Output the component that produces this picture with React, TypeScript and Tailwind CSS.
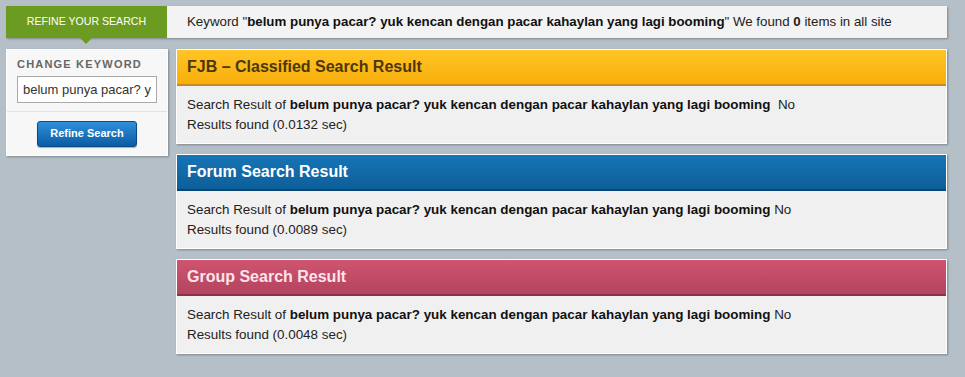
import React from 'react';

const keyword = 'belum punya pacar? yuk kencan dengan pacar kahaylan yang lagi booming';

type Result = {
  title: string;
  time: string;
  head: string;
  color: string;
  gap?: boolean;
};

const results: Result[] = [
  {
    title: 'FJB – Classified Search Result',
    time: '0.0132',
    head: 'bg-gradient-to-b from-[#ffc524] to-[#f8ae0a] border-b-2 border-[#c98a1c]',
    color: 'text-[#4d3706]',
    gap: true,
  },
  {
    title: 'Forum Search Result',
    time: '0.0089',
    head: 'bg-gradient-to-b from-[#1675b6] to-[#0d5f9a] border-b-2 border-[#0a4673]',
    color: 'text-white',
  },
  {
    title: 'Group Search Result',
    time: '0.0048',
    head: 'bg-gradient-to-b from-[#d0546f] to-[#b3445f] border-b-2 border-[#8f3048]',
    color: 'text-[#fbe4ea]',
  },
];

function ResultPanel({ r }: { r: Result }) {
  return (
    <div className="bg-[#f0f0f0] border border-white shadow-[1px_1px_2px_rgba(0,0,0,0.3)]">
      <div className={`h-[36px] flex items-center px-[10px] ${r.head}`}>
        <h2 className={`text-[16px] font-bold ${r.color}`}>{r.title}</h2>
      </div>
      <div className="px-[10px] pt-[9px] pb-[8px] text-[13.4px] leading-[20px] text-[#222]">
        Search Result of <b className="text-[#111]">{keyword}</b>
        {r.gap ? '\u00a0 ' : ' '}No
        <br />
        Results found ({r.time} sec)
      </div>
    </div>
  );
}

export default function App() {
  return (
    <div className="min-h-[377px] bg-[#b4bfc7] pt-[6px] pl-[6px] font-['Liberation_Sans',Arial,sans-serif]">
      {/* top bar */}
      <div className="w-[941px] h-[32px] flex items-center bg-[#f3f3f3] shadow-[1px_1px_2px_rgba(0,0,0,0.3)]">
        <div className="relative w-[161px] h-full bg-[#6c9b22] flex items-center justify-center text-white text-[10.6px] uppercase">
          Refine your search
          <span className="absolute left-[74px] top-full w-0 h-0 border-l-[6px] border-r-[6px] border-t-[6px] border-l-transparent border-r-transparent border-t-[#6c9b22]" />
        </div>
        <p className="pl-[20px] text-[13.3px] text-[#222]">
          Keyword "<b className="text-[#111]">{keyword}</b>" We found <b>0</b> items in all site
        </p>
      </div>

      <div className="flex gap-[8px] mt-[11px]">
        {/* sidebar */}
        <div className="w-[162px] h-[107px] self-start bg-[#f7f7f7] border border-white shadow-[1px_1px_2px_rgba(0,0,0,0.3)]">
          <div className="px-[10px] pt-[6px] pb-[8px] border-b border-[#e2e2e2]">
            <div className="text-[11px] font-bold tracking-[1.2px] text-[#666] mb-[3px]">CHANGE KEYWORD</div>
            <input
              readOnly
              value={keyword}
              className="w-[140px] h-[27px] border border-[#a9a9a9] bg-white px-[5px] text-[13px] text-[#333] outline-none"
            />
          </div>
          <div className="flex justify-center pt-[9px]">
            <button className="w-[100px] h-[26px] rounded-[3px] border border-[#0a4a85] bg-gradient-to-b from-[#2f90da] to-[#0b5ca4] text-white text-[11px] font-bold shadow-[0_1px_1px_rgba(0,0,0,0.3)]">
              Refine Search
            </button>
          </div>
        </div>

        {/* results */}
        <div className="w-[771px] flex flex-col gap-[10px]">
          {results.map((r) => (
            <ResultPanel key={r.title} r={r} />
          ))}
        </div>
      </div>
    </div>
  );
}
